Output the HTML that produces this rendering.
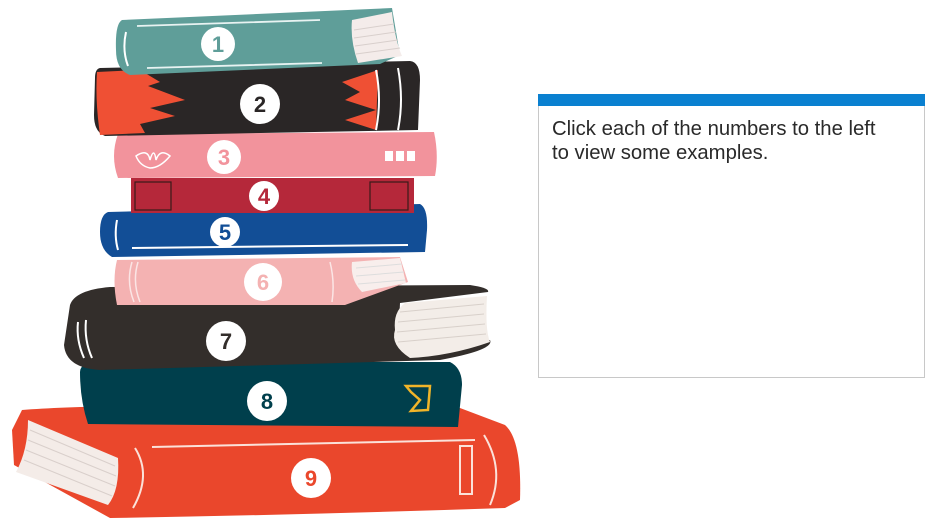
<!DOCTYPE html>
<html><head><style>
html,body{margin:0;padding:0;background:#fff;width:940px;height:528px;overflow:hidden;position:relative}
svg{position:absolute;left:0;top:0}
.panel{position:absolute;left:538px;top:94px;width:387px;height:284px;border:1px solid #c8c8c8;border-top:none;box-sizing:border-box;background:#fff}
.bar{position:absolute;left:538px;top:94px;width:387px;height:12px;background:#0a80d0}
.txt{position:absolute;left:552px;top:117px;width:345px;font-family:"Liberation Sans",sans-serif;font-size:20.3px;line-height:24px;color:#2a2a2a}
svg text{font-family:"Liberation Sans",sans-serif;font-weight:bold;font-size:22px;text-anchor:middle}
</style></head><body>
<svg width="530" height="528" viewBox="0 0 530 528">
<path d="M22,410 Q120,402 460,408 L505,425 Q522,440 520,500 L505,508 Q300,515 110,518 L14,465 L12,430 Z" fill="#ea472c"/>
<path d="M28,420 L118,458 Q120,490 108,505 L16,472 Q28,450 28,420 Z" fill="#f4ece8"/>
<g stroke="#d9cfcb" stroke-width="1"><line x1="30" y1="430" x2="115" y2="466"/><line x1="28" y1="440" x2="116" y2="476"/><line x1="26" y1="450" x2="115" y2="486"/><line x1="24" y1="460" x2="112" y2="496"/></g>
<path d="M152,447 L475,440" stroke="#fbe2da" stroke-width="2"/>
<path d="M135,448 Q152,475 133,508" stroke="#fbe2da" stroke-width="2" fill="none"/>
<path d="M484,435 Q505,470 490,505" stroke="#fbe2da" stroke-width="2" fill="none"/>
<rect x="460" y="446" width="12" height="48" fill="none" stroke="#fbe2da" stroke-width="2"/>
<path d="M80,372 Q80,362 100,362 L450,362 Q462,368 462,385 L458,427 L88,424 Q80,400 80,372 Z" fill="#003f4c"/>
<path d="M406,386 L430,386 L428,410 L411,411 L420,400 L411,392 Z" fill="none" stroke="#f0b429" stroke-width="2.5"/>
<path d="M70,305 Q75,290 110,287 L470,285 Q490,288 488,292 L400,303 L398,345 Q410,355 490,340 Q495,350 440,360 L100,370 Q66,368 64,345 Z" fill="#332e2b"/>
<path d="M405,303 L487,296 Q485,330 490,342 Q450,356 410,358 Q390,345 395,330 Q393,312 405,303 Z" fill="#f3ede8"/>
<g stroke="#d8d0ca" stroke-width="1"><line x1="400" y1="312" x2="484" y2="304"/><line x1="398" y1="322" x2="484" y2="314"/><line x1="397" y1="332" x2="485" y2="324"/><line x1="398" y1="342" x2="486" y2="334"/></g>
<path d="M78,322 Q76,340 84,358 M86,320 Q84,340 92,358" stroke="#fff" stroke-width="2" fill="none"/>
<path d="M117,260 L400,257 L408,282 L345,305 L117,305 Q112,280 117,260 Z" fill="#f4b2b2"/>
<path d="M352,262 L400,258 L406,283 L362,292 Q350,280 352,262 Z" fill="#f8eeec"/>
<g stroke="#ddd" stroke-width="1"><line x1="356" y1="268" x2="402" y2="264"/><line x1="356" y1="276" x2="404" y2="272"/><line x1="358" y1="284" x2="405" y2="280"/></g>
<path d="M132,262 Q126,282 134,302 M138,262 Q132,282 140,302 M330,262 Q335,282 332,302" stroke="#fbe5e5" stroke-width="1.5" fill="none"/>
<path d="M108,212 L420,204 Q428,208 427,230 L425,252 L112,257 Q100,250 100,232 Q100,215 108,212 Z" fill="#124e96"/>
<path d="M117,220 Q114,236 118,250" stroke="#fff" stroke-width="2" fill="none"/>
<path d="M132,248 L408,245" stroke="#fff" stroke-width="2"/>
<rect x="131" y="178" width="283" height="35" fill="#b5283a"/>
<rect x="135" y="182" width="36" height="28" fill="none" stroke="#3a1a1a" stroke-width="1.2"/>
<rect x="370" y="182" width="38" height="28" fill="none" stroke="#3a1a1a" stroke-width="1.2"/>
<path d="M118,134 L434,132 Q439,155 435,176 L118,178 Q110,156 118,134 Z" fill="#f2939c"/>
<path d="M136,156 Q148,148 150,160 Q154,146 156,160 Q160,148 170,156 Q160,168 150,168 Q140,166 136,156 Z" fill="none" stroke="#fff" stroke-width="1.5"/>
<rect x="385" y="151" width="8" height="10" fill="#fff"/><rect x="396" y="151" width="8" height="10" fill="#fff"/><rect x="407" y="151" width="8" height="10" fill="#fff"/>
<path d="M100,68 L410,61 Q420,62 420,80 L418,130 L105,136 Q94,132 94,115 L95,78 Q95,69 100,68 Z" fill="#2a2626"/>
<path d="M97,72 L140,70 L160,82 L148,86 L185,100 L150,108 L175,116 L140,124 L145,133 L100,135 Q95,100 97,72 Z" fill="#ef5034"/>
<path d="M378,70 L342,82 L360,92 L345,100 L376,110 L345,120 L376,130 Z" fill="#ef5034"/>
<path d="M376,70 Q382,100 376,130 M398,68 Q404,100 398,130" stroke="#fff" stroke-width="2" fill="none"/>
<path d="M122,20 L392,8 L400,55 L380,64 L130,75 Q116,70 116,50 Q115,24 122,20 Z" fill="#5f9e99"/>
<path d="M352,20 L392,12 Q395,40 402,56 L358,63 Q350,40 352,20 Z" fill="#f4ecea"/>
<g stroke="#d8cfcc" stroke-width="1"><line x1="354" y1="30" x2="394" y2="24"/><line x1="354" y1="38" x2="396" y2="32"/><line x1="355" y1="46" x2="398" y2="40"/><line x1="356" y1="54" x2="400" y2="48"/></g>
<path d="M137,26 L320,20 M147,68 L322,63" stroke="#e8f3f2" stroke-width="1.8"/>
<path d="M126,32 Q122,50 128,66" stroke="#fff" stroke-width="2" fill="none"/>
<g fill="#fff">
<circle cx="218" cy="44" r="17"/><circle cx="260" cy="104" r="20"/><circle cx="224" cy="157" r="17"/>
<circle cx="264" cy="196" r="15"/><circle cx="225" cy="232" r="15"/><circle cx="263" cy="282" r="19"/>
<circle cx="226" cy="341" r="20"/><circle cx="267" cy="401" r="20"/><circle cx="311" cy="478" r="20"/>
</g>
<text x="218" y="52" fill="#5f9e99">1</text>
<text x="260" y="112" fill="#2a2626">2</text>
<text x="224" y="165" fill="#f2939c">3</text>
<text x="264" y="204" fill="#b5283a" font-size="20">4</text>
<text x="225" y="240" fill="#124e96" font-size="20">5</text>
<text x="263" y="290" fill="#f4b2b2">6</text>
<text x="226" y="349" fill="#332e2b">7</text>
<text x="267" y="409" fill="#003f4c">8</text>
<text x="311" y="486" fill="#ea472c">9</text>
</svg>
<div class="panel"></div>
<div class="bar"></div>
<div class="txt">Click each of the numbers to the left to view some examples.</div>
</body></html>
